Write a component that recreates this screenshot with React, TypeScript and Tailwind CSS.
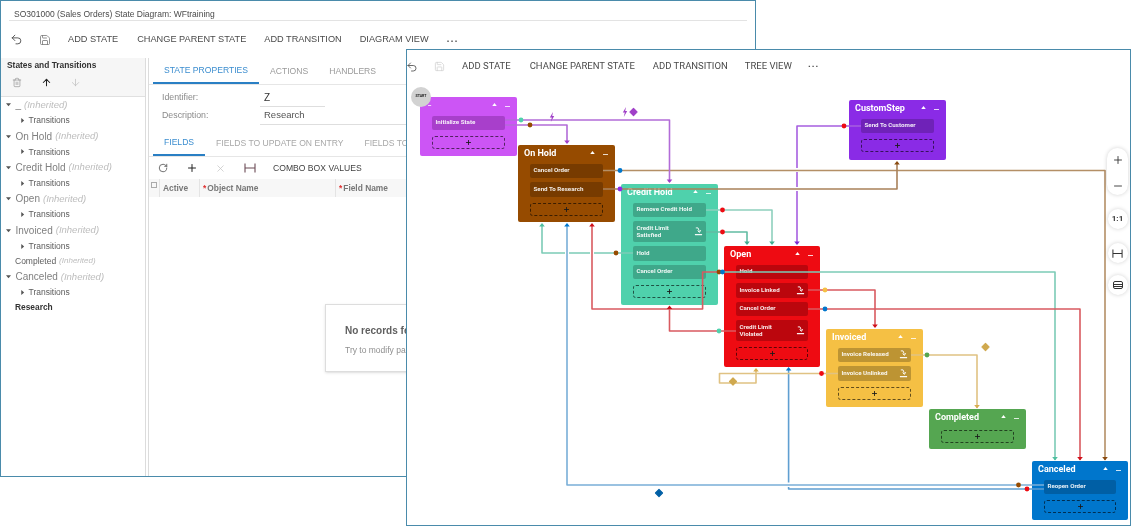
import React from "react";
import { Undo2, Save, Trash2, ArrowUp, ArrowDown, RotateCw, Plus, X, Minus } from "lucide-react";

function FitIcon({ className }: { className?: string }) {
  return (
    <svg viewBox="0 0 12 12" className={className} fill="none" stroke="currentColor" strokeWidth="1.1">
      <path d="M1 1.5v9M11 1.5v9M1 6h10" />
    </svg>
  );
}

function Caret({ open }: { open?: boolean }) {
  return (
    <svg viewBox="0 0 6 6" className="w-[5px] h-[5px] text-[#555]" fill="currentColor">
      {open ? <path d="M0 1.5h6L3 5z" /> : <path d="M1.5 0v6L5 3z" />}
    </svg>
  );
}

function TreeParent({ name }: { name: string }) {
  return (
    <div className="h-[15.7px] flex items-center">
      <div className="w-[14.5px] pl-[5px] flex items-center">
        <Caret open />
      </div>
      <span className="text-[10px] text-[#808080]">{name}</span>
      <span className="ml-[3px] text-[9.5px] italic text-[#bdbdbd]">(Inherited)</span>
    </div>
  );
}

function TreeChild() {
  return (
    <div className="h-[15.7px] flex items-center pl-[18.5px]">
      <div className="w-[9px]">
        <Caret />
      </div>
      <span className="text-[8.5px] text-[#5c5c5c]">Transitions</span>
    </div>
  );
}

function BackWindow() {
  return (
    <div className="absolute left-0 top-0 w-[756px] h-[477px] bg-white border-[1.5px] border-[#4a8bab] overflow-hidden flex flex-col font-['Liberation_Sans',sans-serif]">
      <div className="mx-[8px] h-[20px] px-[5px] border-b border-[#e3e3e3] flex items-center shrink-0">
        <span className="text-[8.5px] text-[#4a4a4a] pt-[8px]">SO301000 (Sales Orders) State Diagram: WFtraining</span>
      </div>
      <div className="h-[37px] shrink-0 flex items-center pl-[9px] text-[9.2px] text-[#4a4a4a]">
        <Undo2 className="w-[13px] h-[13px] text-[#444]" strokeWidth={1.6} />
        <Save className="w-[12px] h-[12px] ml-[16px] text-[#777]" strokeWidth={1.6} />
        <span className="ml-[17px]">ADD STATE</span>
        <span className="ml-[19px]">CHANGE PARENT STATE</span>
        <span className="ml-[18px]">ADD TRANSITION</span>
        <span className="ml-[18px]">DIAGRAM VIEW</span>
        <span className="ml-[18px] tracking-[1.5px] font-bold">...</span>
      </div>
      <div className="flex-1 flex min-h-0">
        <div className="w-[145px] shrink-0 border-r border-[#dcdcdc] flex flex-col">
          <div className="h-[39px] bg-[#f6f6f6] border-b border-[#e0e0e0] pl-[6px] pt-[1px] shrink-0">
            <div className="text-[8.4px] font-bold text-[#333]">States and Transitions</div>
            <div className="flex items-center mt-[5px] pl-[5px]">
              <Trash2 className="w-[10px] h-[11px] text-[#8a8a8a]" strokeWidth={1.5} />
              <ArrowUp className="w-[11px] h-[11px] ml-[19px] text-[#222]" strokeWidth={2.2} />
              <ArrowDown className="w-[11px] h-[11px] ml-[18px] text-[#bbb]" strokeWidth={1.5} />
            </div>
          </div>
          <TreeParent name="_" />
          <TreeChild />
          <TreeParent name="On Hold" />
          <TreeChild />
          <TreeParent name="Credit Hold" />
          <TreeChild />
          <TreeParent name="Open" />
          <TreeChild />
          <TreeParent name="Invoiced" />
          <TreeChild />
          <div className="h-[15px] flex items-center pl-[14px]">
            <span className="text-[8.5px] text-[#5c5c5c]">Completed</span>
            <span className="ml-[3px] text-[8px] italic text-[#bdbdbd]">(Inherited)</span>
          </div>
          <TreeParent name="Canceled" />
          <TreeChild />
          <div className="h-[15px] flex items-center pl-[14px]">
            <span className="text-[8.4px] font-bold text-[#333]">Research</span>
          </div>
        </div>
        <div className="ml-[2px] flex-1 border-l border-[#dcdcdc] flex flex-col relative">
          <div className="h-[27px] shrink-0 flex pl-[4px] border-b border-[#e6e6e6] text-[8.6px] text-[#9a9a9a]">
            <div className="px-[11px] flex items-center border-b-2 border-[#2a7fc4] text-[#3b8dcf]">STATE PROPERTIES</div>
            <div className="px-[11px] flex items-center">ACTIONS</div>
            <div className="px-[10px] flex items-center">HANDLERS</div>
          </div>
          <div className="pt-[4px] pl-[13px] text-[8.8px] text-[#8a8a8a] shrink-0">
            <div className="h-[18px] flex items-center">
              <span className="w-[98px]">Identifier:</span>
              <span className="w-[65px] h-full flex items-center pl-[4px] border-b border-[#dedede] text-[#333] text-[10px]">Z</span>
            </div>
            <div className="h-[18px] flex items-center">
              <span className="w-[98px]">Description:</span>
              <span className="w-[300px] h-full flex items-center pl-[4px] border-b border-[#dedede] text-[#555] text-[9.5px]">Research</span>
            </div>
          </div>
          <div className="mt-[6px] h-[26px] shrink-0 flex pl-[4px] border-b border-[#e6e6e6] text-[8.6px] text-[#a8a8a8]">
            <div className="px-[11px] flex items-center border-b-2 border-[#2a7fc4] text-[#3b8dcf]">FIELDS</div>
            <div className="px-[11px] flex items-center">FIELDS TO UPDATE ON ENTRY</div>
            <div className="px-[10px] flex items-center whitespace-nowrap">FIELDS TO UPDATE ON EXIT</div>
          </div>
          <div className="h-[22px] shrink-0 flex items-center pl-[9px]">
            <RotateCw className="w-[10px] h-[10px] text-[#444]" strokeWidth={1.8} />
            <Plus className="w-[12px] h-[12px] ml-[18px] text-[#222]" strokeWidth={2} />
            <X className="w-[11px] h-[11px] ml-[17px] text-[#c4c4c4]" strokeWidth={1.6} />
            <FitIcon className="w-[12px] h-[12px] ml-[18px] text-[#6b4a55]" />
            <span className="ml-[17px] text-[8.6px] text-[#3f3f3f]">COMBO BOX VALUES</span>
          </div>
          <div className="h-[18px] shrink-0 bg-[#f7f7f7] flex text-[8.4px] font-bold text-[#777]">
            <div className="w-[11px] border-r border-[#e4e4e4] flex justify-center pt-[3px]">
              <div className="w-[6px] h-[6px] border border-[#aaa]"></div>
            </div>
            <div className="w-[40px] border-r border-[#e4e4e4] pl-[3px] flex items-center">Active</div>
            <div className="w-[136px] border-r border-[#e4e4e4] pl-[3px] flex items-center">
              <span className="text-[#e03131] mr-[1px]">*</span>Object Name
            </div>
            <div className="pl-[3px] flex items-center">
              <span className="text-[#e03131] mr-[1px]">*</span>Field Name
            </div>
          </div>
          <div className="absolute left-[176px] top-[246px] w-[200px] h-[68px] bg-white border border-[#dddddd] shadow-sm pl-[19px] pt-[18px]">
            <div className="text-[10px] font-bold text-[#5f5f5f]">No records found</div>
            <div className="mt-[6px] text-[8.5px] text-[#8f8f8f]">Try to modify parameters</div>
          </div>
        </div>
      </div>
    </div>
  );
}

function FrontWindow() {
  return (
    <div className="absolute left-[406px] top-[49px] w-[725px] h-[477px] bg-white border-[1.5px] border-[#4a8bab] font-['Roboto',sans-serif]">
      <div className="h-[33px] flex items-center text-[9.5px] text-[#4a4a4a]">
        <Undo2 className="w-[12px] h-[12px] text-[#444] -ml-[1px]" strokeWidth={1.6} />
        <Save className="w-[11px] h-[11px] ml-[16px] text-[#cfcfcf]" strokeWidth={1.6} />
        <span className="ml-[17px]">ADD STATE</span>
        <span className="ml-[19px]">CHANGE PARENT STATE</span>
        <span className="ml-[18px]">ADD TRANSITION</span>
        <span className="ml-[17px]">TREE VIEW</span>
        <span className="ml-[16px] tracking-[1px] font-bold -mt-[5px]">...</span>
      </div>
    </div>
  );
}

function TransitionIcon() {
  return (
    <svg viewBox="0 0 10 10" className="w-[9px] h-[9px] shrink-0" fill="none" stroke="white" strokeWidth="1">
      <path d="M2 1h2.5l1.5 4" />
      <path d="M4 4l2 2 1.5-2.5" />
      <path d="M1 8.5h8" strokeWidth="1.3" />
    </svg>
  );
}

function Row({ children, tall, icon, bg }: { children: React.ReactNode; tall?: boolean; icon?: boolean; bg: string }) {
  return (
    <div className={`${tall ? "h-[21px]" : "h-[14.5px]"} ${bg} rounded-[2px] flex items-center justify-between pl-[3.5px] pr-[3.5px] text-[6.2px] leading-[7px] font-bold text-white/90`}>
      <span>{children}</span>
      {icon ? <TransitionIcon /> : null}
    </div>
  );
}

function AddBox() {
  return (
    <div className="h-[13px] mt-[2px] rounded-[3px] border border-dashed border-black/60 flex items-center justify-center">
      <Plus className="w-[7px] h-[7px] text-[#1a1a1a]" strokeWidth={3} />
    </div>
  );
}

function NodeHead({ title, small }: { title: string; small?: boolean }) {
  return (
    <div className="h-[13.5px] relative flex items-center -mx-[6px] pr-[1px]">
      <span className={small ? "text-[7px] font-bold text-white/90 ml-[2px] -mt-[3px]" : "text-[9px] font-bold text-white whitespace-nowrap mt-[2px]"}>{title}</span>
      <div className="ml-auto flex items-center gap-[8px]">
        <svg viewBox="0 0 6 4" className="w-[5px] h-[3px]" fill="white">
          <path d="M0 4L3 0l3 4z" />
        </svg>
        <div className="w-[5px] h-[1px] bg-white/80 mt-[3px]"></div>
      </div>
    </div>
  );
}

const bodyCls = "absolute rounded-[2px] px-[12px] pt-[1px] flex flex-col gap-[4px] font-['Roboto',sans-serif]";

function Nodes() {
  return (
    <>
      <div className={`${bodyCls} left-[420px] top-[97px] w-[97px] h-[59px] bg-[#cc55f5]`}>
        <NodeHead title="_" small />
        <Row bg="bg-[#a83fcb]">Initialize State</Row>
        <AddBox />
      </div>
      <div className={`${bodyCls} left-[518px] top-[145px] w-[97px] h-[77px] bg-[#964b00]`}>
        <NodeHead title="On Hold" />
        <Row bg="bg-[#773b00]">Cancel Order</Row>
        <Row bg="bg-[#773b00]">Send To Research</Row>
        <AddBox />
      </div>
      <div className={`${bodyCls} left-[621px] top-[184px] w-[97px] h-[121px] bg-[#4fd1ac]`}>
        <NodeHead title="Credit Hold" />
        <Row bg="bg-[#3fa88a]">Remove Credit Hold</Row>
        <Row bg="bg-[#3fa88a]" tall icon>
          Credit Limit
          <br />
          Satisfied
        </Row>
        <Row bg="bg-[#3fa88a]">Hold</Row>
        <Row bg="bg-[#3fa88a]">Cancel Order</Row>
        <AddBox />
      </div>
      <div className={`${bodyCls} left-[724px] top-[246px] w-[96px] h-[121px] bg-[#ee0b12]`}>
        <NodeHead title="Open" />
        <Row bg="bg-[#bb060d]">Hold</Row>
        <Row bg="bg-[#bb060d]" icon>Invoice Linked</Row>
        <Row bg="bg-[#bb060d]">Cancel Order</Row>
        <Row bg="bg-[#bb060d]" tall icon>
          Credit Limit
          <br />
          Violated
        </Row>
        <AddBox />
      </div>
      <div className={`${bodyCls} left-[826px] top-[329px] w-[97px] h-[78px] bg-[#f5c044]`}>
        <NodeHead title="Invoiced" />
        <Row bg="bg-[#bd9433]" icon>Invoice Released</Row>
        <Row bg="bg-[#bd9433]" icon>Invoice Unlinked</Row>
        <AddBox />
      </div>
      <div className={`${bodyCls} left-[929px] top-[409px] w-[97px] h-[40px] bg-[#55a651]`}>
        <NodeHead title="Completed" />
        <AddBox />
      </div>
      <div className={`${bodyCls} left-[1032px] top-[461px] w-[96px] h-[59px] bg-[#0076cc]`}>
        <NodeHead title="Canceled" />
        <Row bg="bg-[#005fa5]">Reopen Order</Row>
        <AddBox />
      </div>
      <div className={`${bodyCls} left-[849px] top-[100px] w-[97px] h-[60px] bg-[#8a2be6]`}>
        <NodeHead title="CustomStep" />
        <Row bg="bg-[#6f22b8]">Send To Customer</Row>
        <AddBox />
      </div>
      <div className="absolute left-[411px] top-[87px] w-[20px] h-[20px] rounded-full bg-[#d2d2d2] flex items-center justify-center text-[3.6px] font-bold text-[#222] font-['Roboto',sans-serif]">
        START
      </div>
    </>
  );
}

const TEAL = "#7ccbb6";
const PURPLE = "#b26cd8";
const VIOLET = "#a75fe0";
const BLUE = "#79aed8";
const RED = "#d95a60";
const TAN = "#e0c283";
const BROWN = "#b48f66";

const lines: { d: string; c: string; w?: number }[] = [
  { d: "M633 253H542V224", c: TEAL },
  { d: "M567 251V255M592 251V255", c: "#ffffff", w: 4 },
  { d: "M1044 489H788.6V369", c: "#5f9fd1" },
  { d: "M788.6 482.5V487", c: "#ffffff", w: 3 },
  { d: "M1044 485H567V224", c: BLUE },
  { d: "M861 126H797V243", c: VIOLET },
  { d: "M797 168V172M797 187V191", c: "#ffffff", w: 3.5 },
  { d: "M603 170.5H1105V460", c: BROWN },
  { d: "M603 189H897V163", c: "#a9815a" },
  { d: "M505 120H669.5V182", c: PURPLE },
  { d: "M505 125H567V143", c: PURPLE },
  { d: "M706 210H772V244", c: "#8ed0bd" },
  { d: "M706 232H747V244", c: "#62bca3" },
  { d: "M719 272H702.6V309H592V224", c: RED },
  { d: "M736 331H669.5V307", c: RED },
  { d: "M722 272H1055V460", c: TEAL },
  { d: "M808 290H875V327", c: RED },
  { d: "M808 309H1080V460", c: RED },
  { d: "M911 355H977V408", c: TAN },
  { d: "M838 373.5H719.5V383H756V369", c: TAN },
];

const downArrows: [number, number, string][] = [
  [567, 144, "#a040c8"],
  [669.5, 183, "#a040c8"],
  [747, 245, "#40ad90"],
  [772, 245, "#40ad90"],
  [797, 245, "#7a2bd0"],
  [875, 328, "#d0101a"],
  [1055, 460.5, "#4fbf9f"],
  [1080, 460.5, "#d0101a"],
  [1105, 460.5, "#8a4b10"],
  [977, 408.5, "#d8ac50"],
];

const upArrows: [number, number, string][] = [
  [542, 223, "#4fbf9f"],
  [567, 223, "#0076cc"],
  [592, 223, "#d0101a"],
  [669.5, 305.5, "#c81018"],
  [756, 368, "#d8ac50"],
  [788.6, 367, "#0076cc"],
  [897, 161, "#8a4b10"],
];

const dots: [number, number, string][] = [
  [521, 120, "#4fd1ac"],
  [530, 125, "#964b00"],
  [620, 170.5, "#0076cc"],
  [620, 189, "#8a2be6"],
  [844, 126, "#ee0b12"],
  [722.5, 210, "#ee0b12"],
  [722.5, 232, "#ee0b12"],
  [616, 253, "#964b00"],
  [719, 272, "#964b00"],
  [722.5, 272, "#0076cc"],
  [719, 331, "#4fd1ac"],
  [825, 290, "#f5c044"],
  [825, 309, "#0076cc"],
  [927, 355, "#55a651"],
  [821.5, 373.5, "#ee0b12"],
  [1018.5, 485, "#964b00"],
  [1027, 489, "#ee0b12"],
];

function Bolt({ x, y }: { x: number; y: number }) {
  return <path transform={`translate(${x} ${y})`} d="M1 -5L-2.2 0.6H-0.2L-1.2 5L2.2 -1H0.2z" fill="#a040c8" />;
}

function Diamond({ x, y, c }: { x: number; y: number; c: string }) {
  return <path d={`M${x} ${y - 3.5}L${x + 3.5} ${y}L${x} ${y + 3.5}L${x - 3.5} ${y}z`} fill={c} stroke={c} strokeLinejoin="round" strokeWidth="1.2" />;
}

function Wires() {
  return (
    <svg className="absolute inset-0 w-[1131px] h-[526px] pointer-events-none" viewBox="0 0 1131 526" fill="none">
      {lines.map((l, i) => (
        <path key={i} d={l.d} stroke={l.c} strokeWidth={l.w ?? 1.6} strokeLinejoin="round" />
      ))}
      {downArrows.map(([x, y, c], i) => (
        <path key={i} d={`M${x - 2.8} ${y - 3.5}H${x + 2.8}L${x} ${y}z`} fill={c} />
      ))}
      {upArrows.map(([x, y, c], i) => (
        <path key={i} d={`M${x - 2.8} ${y + 3.5}H${x + 2.8}L${x} ${y}z`} fill={c} />
      ))}
      {dots.map(([x, y, c], i) => (
        <circle key={i} cx={x} cy={y} r="2.4" fill={c} />
      ))}
      <Bolt x={552} y={117} />
      <Bolt x={625} y={112} />
      <Diamond x={633.5} y={112} c="#a040c8" />
      <Diamond x={985.5} y={347} c="#d0a94f" />
      <Diamond x={733} y={381.5} c="#d0a94f" />
      <Diamond x={659} y={493} c="#005fa5" />
    </svg>
  );
}

function ZoomControls() {
  const circle = "w-[20px] h-[20px] rounded-full bg-white shadow-[0_0_4px_rgba(0,0,0,0.18)] flex items-center justify-center text-[#333]";
  return (
    <div className="absolute left-[1107px] top-[148px] w-[21px] flex flex-col items-center font-['Roboto',sans-serif]">
      <div className="w-[21px] h-[47px] rounded-full bg-white shadow-[0_0_4px_rgba(0,0,0,0.18)] flex flex-col items-center justify-between pt-[6px] pb-[3px] text-[#333]">
        <Plus className="w-[12px] h-[12px]" strokeWidth={1.8} />
        <Minus className="w-[12px] h-[12px]" strokeWidth={1.8} />
      </div>
      <div className={`${circle} mt-[14px] text-[8px] font-bold`}>1:1</div>
      <div className={`${circle} mt-[14px]`}>
        <FitIcon className="w-[11px] h-[11px]" />
      </div>
      <div className={`${circle} mt-[12px]`}>
        <div className="w-[10px] h-[8px] rounded-[2px] border border-[#333] flex flex-col justify-end pb-[1px] gap-[1px] bg-white">
          <div className="h-[1px] bg-[#333]"></div>
          <div className="h-[1px] bg-[#333]"></div>
        </div>
      </div>
    </div>
  );
}

export default function App() {
  return (
    <div className="relative w-[1131px] h-[526px] bg-white overflow-hidden blur-[0.4px]">
      <BackWindow />
      <FrontWindow />
      <Nodes />
      <Wires />
      <ZoomControls />
    </div>
  );
}
